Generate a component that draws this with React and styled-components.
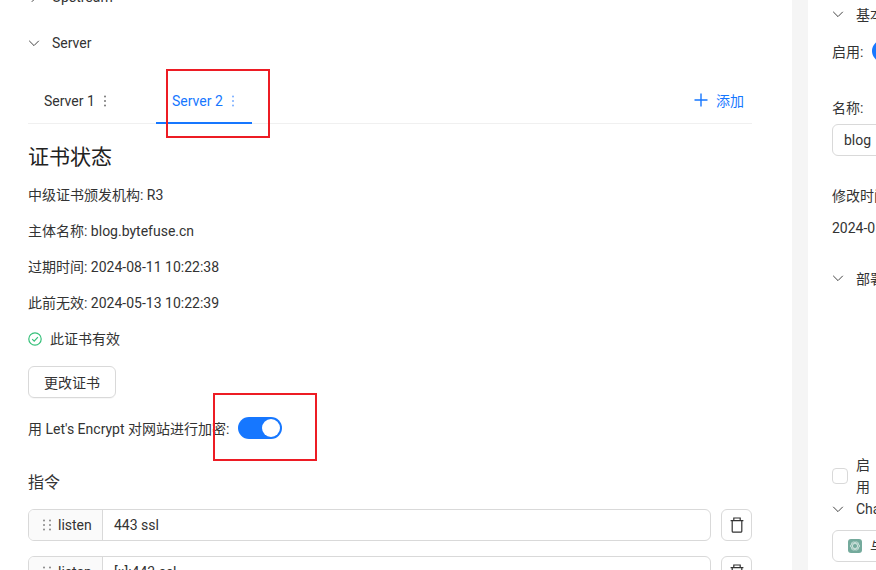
import React from "react";
import styled, { createGlobalStyle } from "styled-components";

const GlobalStyle = createGlobalStyle`
  html, body {
    margin: 0;
    padding: 0;
    background: #fff;
  }
  body {
    font-family: Roboto, "Noto Sans CJK SC", sans-serif;
    font-size: 14px;
    color: #333;
  }
`;

const Chevron = ({ open = true }) => (
  <ChevronSvg viewBox="0 0 12 12" $open={open}>
    <path d="M1.2 3.8 6 8.6l4.8-4.8" fill="none" stroke="currentColor" strokeWidth="1" />
  </ChevronSvg>
);

const Dots = () => (
  <DotsSvg viewBox="0 0 4 14">
    <circle cx="2" cy="2.5" r="1" fill="currentColor" />
    <circle cx="2" cy="7" r="1" fill="currentColor" />
    <circle cx="2" cy="11.5" r="1" fill="currentColor" />
  </DotsSvg>
);

const Grip = () => (
  <svg width="8" height="12" viewBox="0 0 8 12">
    {[1.5, 6, 10.5].map((y) =>
      [1, 7].map((x) => <circle key={`${x}-${y}`} cx={x} cy={y} r="1" fill="#888" />)
    )}
  </svg>
);

const Trash = () => (
  <svg width="14" height="16" viewBox="0 0 14 16" fill="none" stroke="#333" strokeWidth="1.2">
    <path d="M.6 3.6h12.8M3.8 3.4V1h6.4v2.4M2.2 3.8v10.4a1 1 0 0 0 1 1h7.6a1 1 0 0 0 1-1V3.8" />
  </svg>
);

const Directive = ({ name, value }) => (
  <DirectiveRow>
    <InputGroup>
      <DirectiveName>
        <Grip />
        {name}
      </DirectiveName>
      <DirectiveValue>{value}</DirectiveValue>
    </InputGroup>
    <DeleteButton>
      <Trash />
    </DeleteButton>
  </DirectiveRow>
);

const App = () => {
  return (
    <Page>
      <GlobalStyle />
      <Main>
        <SectionHead $clipped>
          <Chevron open={false} />
          Upstream
        </SectionHead>
        <SectionHead>
          <Chevron />
          Server
        </SectionHead>
        <Tabs>
          <Tab>
            Server 1 <Dots />
          </Tab>
          <Tab $active>
            Server 2 <Dots />
          </Tab>
          <AddTab>
            <svg width="14" height="14" viewBox="0 0 14 14">
              <path d="M7 .5v13M.5 7h13" stroke="currentColor" strokeWidth="1.4" />
            </svg>
            添加
          </AddTab>
        </Tabs>
        <Heading>证书状态</Heading>
        <Line>中级证书颁发机构: R3</Line>
        <Line>主体名称: blog.bytefuse.cn</Line>
        <Line>过期时间: 2024-08-11 10:22:38</Line>
        <Line>此前无效: 2024-05-13 10:22:39</Line>
        <ValidLine>
          <svg width="14" height="14" viewBox="0 0 14 14" fill="none" stroke="#36c07a" strokeWidth="1.2">
            <circle cx="7" cy="7" r="6.2" />
            <path d="M4.2 7.2 6.2 9.2 9.9 5.2" />
          </svg>
          此证书有效
        </ValidLine>
        <OutlineButton>更改证书</OutlineButton>
        <EncryptRow>
          用 Let's Encrypt 对网站进行加密:
          <Switch>
            <Knob />
          </Switch>
        </EncryptRow>
        <SubHeading>指令</SubHeading>
        <Directive name="listen" value="443 ssl" />
        <Directive name="listen" value="[::]:443 ssl" />
        <HighlightOne />
        <HighlightTwo />
      </Main>
      <Gutter />
      <Side>
        <SideHead $mt="3px">
          <Chevron />
          基本
        </SideHead>
        <SideField $mt="15px">
          启用:
          <MiniSwitch />
        </SideField>
        <SideLabel $mt="36px">名称:</SideLabel>
        <SideInput $mt="6px">blog</SideInput>
        <SideLabel $mt="30px">修改时间:</SideLabel>
        <SideLabel $mt="12px">2024-05-13 10:22:39</SideLabel>
        <SideHead $mt="29px">
          <Chevron />
          部署
        </SideHead>
        <CheckRow>
          <CheckBox />
          <NarrowText>启用</NarrowText>
        </CheckRow>
        <SideHead $mt="0px">
          <Chevron />
          ChatGPT
        </SideHead>
        <SideInput $mt="10px">
          <GptIcon viewBox="0 0 14 14">
            <rect width="14" height="14" rx="3" fill="#74aa9c" />
            <g fill="none" stroke="#d5e6e1" strokeWidth="0.8">
              <ellipse cx="7" cy="7" rx="4.6" ry="2.4" />
              <ellipse cx="7" cy="7" rx="4.6" ry="2.4" transform="rotate(60 7 7)" />
              <ellipse cx="7" cy="7" rx="4.6" ry="2.4" transform="rotate(120 7 7)" />
            </g>
          </GptIcon>
          与 ChatGPT 对话
        </SideInput>
      </Side>
    </Page>
  );
};

export default App;

const Page = styled.div`
  width: 876px;
  height: 570px;
  display: flex;
  overflow: hidden;
  position: relative;
`;

const Main = styled.div`
  width: 724px;
  flex: none;
  padding: 0 40px 0 28px;
  position: relative;
  height: 570px;
`;

const Gutter = styled.div`
  width: 16px;
  flex: none;
  background: #f5f5f5;
`;

const Side = styled.div`
  width: 300px;
  flex: none;
  padding: 0 0 0 24px;
`;

const ChevronSvg = styled.svg`
  width: 12px;
  height: 12px;
  flex: none;
  color: #444;
  transform: ${(p) => (p.$open ? "none" : "rotate(-90deg)")};
`;

const DotsSvg = styled.svg`
  width: 4px;
  height: 14px;
  margin-left: 8px;
  color: #777;
`;

const SectionHead = styled.div`
  display: flex;
  align-items: center;
  gap: 12px;
  height: 22px;
  margin-top: ${(p) => (p.$clipped ? "-14px" : "24px")};
  color: #333;
`;

const Tabs = styled.div`
  display: flex;
  align-items: stretch;
  height: 43px;
  margin-top: 26px;
  border-bottom: 1px solid #f0f0f0;
`;

const Tab = styled.div`
  display: flex;
  align-items: center;
  box-sizing: border-box;
  width: ${(p) => (p.$active ? "96px" : "128px")};
  padding-left: 16px;
  height: 44px;
  color: ${(p) => (p.$active ? "#1677ff" : "#333")};
  border-bottom: 2px solid ${(p) => (p.$active ? "#1677ff" : "transparent")};
  ${DotsSvg} {
    color: ${(p) => (p.$active ? "#7aaeff" : "#777")};
  }
`;

const AddTab = styled.div`
  margin-left: auto;
  display: flex;
  align-items: center;
  gap: 8px;
  padding: 0 8px 3px 0;
  color: #1677ff;
`;

const Heading = styled.div`
  font-size: 21px;
  line-height: 22px;
  margin-top: 22px;
  margin-bottom: -15px;
  padding-bottom: 16px;
  color: #222;
`;

const Line = styled.div`
  line-height: 20px;
  margin-top: 16px;
`;

const ValidLine = styled(Line)`
  display: flex;
  align-items: center;
  gap: 8px;
`;

const OutlineButton = styled.div`
  box-sizing: border-box;
  width: 88px;
  height: 32px;
  margin-top: 17px;
  border: 1px solid #d9d9d9;
  border-radius: 6px;
  display: flex;
  align-items: center;
  justify-content: center;
  box-shadow: 0 1px 0 rgba(0, 0, 0, 0.03);
`;

const EncryptRow = styled.div`
  display: flex;
  align-items: center;
  gap: 9px;
  height: 22px;
  margin-top: 19px;
`;

const Switch = styled.div`
  width: 44px;
  height: 22px;
  border-radius: 11px;
  background: #1677ff;
  position: relative;
`;

const Knob = styled.div`
  position: absolute;
  top: 2px;
  right: 2px;
  width: 18px;
  height: 18px;
  border-radius: 50%;
  background: #fff;
`;

const SubHeading = styled.div`
  font-size: 16px;
  line-height: 22px;
  margin-top: 33px;
  margin-bottom: 15px;
`;

const DirectiveRow = styled.div`
  display: flex;
  gap: 10px;
  margin-bottom: 15px;
`;

const InputGroup = styled.div`
  flex: 1;
  box-sizing: border-box;
  height: 32px;
  display: flex;
  border: 1px solid #d9d9d9;
  border-radius: 6px;
  overflow: hidden;
`;

const DirectiveName = styled.div`
  width: 74px;
  flex: none;
  box-sizing: border-box;
  padding-left: 14px;
  display: flex;
  align-items: center;
  gap: 7px;
  background: #fafafa;
  border-right: 1px solid #d9d9d9;
`;

const DirectiveValue = styled.div`
  display: flex;
  align-items: center;
  padding-left: 11px;
`;

const DeleteButton = styled.div`
  box-sizing: border-box;
  width: 31px;
  height: 32px;
  flex: none;
  border: 1px solid #d9d9d9;
  border-radius: 6px;
  display: flex;
  align-items: center;
  justify-content: center;
`;

const Highlight = styled.div`
  position: absolute;
  box-sizing: border-box;
  border: 2px solid #ed1c24;
`;

const HighlightOne = styled(Highlight)`
  left: 166px;
  top: 69px;
  width: 104px;
  height: 69px;
`;

const HighlightTwo = styled(Highlight)`
  left: 213px;
  top: 393px;
  width: 104px;
  height: 68px;
`;

const SideHead = styled.div`
  display: flex;
  align-items: center;
  gap: 12px;
  height: 22px;
  margin-top: ${(p) => p.$mt || "4px"};
`;

const SideField = styled.div`
  display: flex;
  align-items: center;
  gap: 9px;
  height: 22px;
  margin-top: ${(p) => p.$mt || "0"};
`;

const MiniSwitch = styled.div`
  width: 44px;
  height: 22px;
  border-radius: 11px;
  background: #1677ff;
`;

const SideLabel = styled.div`
  line-height: 20px;
  margin-top: ${(p) => p.$mt || "0"};
`;

const SideInput = styled.div`
  box-sizing: border-box;
  width: 220px;
  height: 32px;
  display: flex;
  align-items: center;
  gap: 8px;
  margin-top: ${(p) => p.$mt || "5px"};
  padding-left: 11px;
  border: 1px solid #d9d9d9;
  border-radius: 6px;
`;

const CheckRow = styled.div`
  display: flex;
  align-items: center;
  gap: 8px;
  margin-top: 165px;
`;

const CheckBox = styled.div`
  box-sizing: border-box;
  width: 16px;
  height: 16px;
  border: 1px solid #d9d9d9;
  border-radius: 4px;
`;

const NarrowText = styled.div`
  width: 14px;
  line-height: 22px;
`;

const GptIcon = styled.svg`
  width: 14px;
  height: 14px;
  flex: none;
  margin-left: 4px;
`;
